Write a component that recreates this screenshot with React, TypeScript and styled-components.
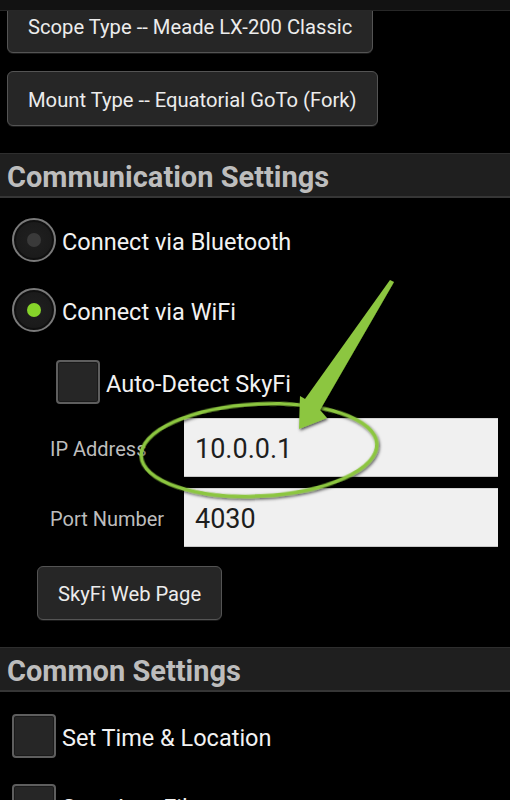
import React from "react";
import styled, { createGlobalStyle } from "styled-components";

const Global = createGlobalStyle`
  html, body { margin: 0; padding: 0; background: #000; }
  body { font-family: Roboto, "Noto Sans", sans-serif; overflow: hidden; }
  * { box-sizing: border-box; }
`;

const Page = styled.div`
  position: relative;
  width: 510px;
  height: 800px;
  overflow: hidden;
  background: #000;
`;

const TopBar = styled.div`
  position: absolute;
  top: 0;
  left: 0;
  right: 0;
  height: 11px;
  background: #121212;
  border-bottom: 1px solid #272727;
  overflow: hidden;
  display: flex;
  align-items: flex-end;
  z-index: 2;
`;

const TopTitle = styled.div`
  font-size: 29px;
  font-weight: 700;
  line-height: 32px;
  color: #bdbdbd;
  padding-left: 7px;
  margin-bottom: 11px;
  white-space: nowrap;
`;

const Content = styled.div`
  display: flex;
  flex-direction: column;
  margin-top: -2px;
`;

const Block = styled.div<{ $mt?: number; $pl?: number }>`
  margin-top: ${(p) => p.$mt ?? 0}px;
  padding-left: ${(p) => p.$pl ?? 0}px;
  display: flex;
  align-items: center;
`;

const ActionButton = styled.button<{ $h?: number }>`
  height: ${(p) => p.$h ?? 55}px;
  padding: 2px 20px 0;
  background: #262626;
  border: 1px solid #545454;
  border-radius: 6px;
  color: #ececec;
  font-family: Roboto, sans-serif;
  font-size: 20.2px;
  white-space: nowrap;
  box-shadow: 0 1px 0 #1a1a1a;
`;

const SectionHeader = styled.div<{ $mt: number }>`
  margin-top: ${(p) => p.$mt}px;
  height: 45px;
  background: #1f1f1f;
  border-top: 1px solid #2e2e2e;
  border-bottom: 2px solid #363636;
  display: flex;
  align-items: center;
  padding: 4px 0 0 7px;
  font-size: 29px;
  font-weight: 700;
  color: #bdbdbd;
  white-space: nowrap;
`;

const Option = styled.label`
  display: flex;
  align-items: center;
  gap: 6px;
  font-size: 23.5px;
  color: #f2f2f2;
  white-space: nowrap;
`;

const OptionText = styled.span`
  padding-top: 3px;
`;

const RadioCircle = styled.span<{ $on?: boolean }>`
  width: 44px;
  height: 44px;
  border-radius: 50%;
  border: 2px solid #7a7a7a;
  background: radial-gradient(circle, #202020 0%, #1a1a1a 70%, #141414 100%);
  box-shadow: inset 0 0 0 2px #101010;
  display: flex;
  align-items: center;
  justify-content: center;
  &::after {
    content: "";
    width: 14px;
    height: 14px;
    border-radius: 50%;
    background: ${(p) => (p.$on ? "#86d42a" : "#3a3a3a")};
  }
`;

const CheckBox = styled.span`
  width: 44px;
  height: 44px;
  border: 2px solid #5e5e5e;
  border-radius: 4px;
  background: #262626;
  box-shadow: inset 0 0 0 1px #1a1a1a;
`;

const FieldRow = styled.div<{ $mt: number }>`
  margin-top: ${(p) => p.$mt}px;
  display: grid;
  grid-template-columns: 134px 314px;
  align-items: center;
  padding-left: 50px;
`;

const FieldLabel = styled.span`
  font-size: 20px;
  color: #bdbdbd;
  white-space: nowrap;
  padding-top: 3px;
`;

const FieldInput = styled.div`
  height: 59px;
  background: #f0f0f0;
  border-top: 1px solid #d4d4d4;
  border-bottom: 1px solid #c8c8c8;
  display: flex;
  align-items: center;
  padding: 2px 0 0 11px;
  font-size: 27px;
  color: #1e1e1e;
`;

const Annotation = styled.svg`
  position: absolute;
  top: 0;
  left: 0;
  width: 510px;
  height: 800px;
  pointer-events: none;
  z-index: 3;
`;

export default function App() {
  return (
    <Page>
      <Global />
      <Content>
        <Block $pl={7}>
          <ActionButton>Scope Type -- Meade LX-200 Classic</ActionButton>
        </Block>
        <Block $pl={7} $mt={18}>
          <ActionButton>Mount Type -- Equatorial GoTo (Fork)</ActionButton>
        </Block>

        <SectionHeader $mt={27}>Communication Settings</SectionHeader>

        <Block $pl={12} $mt={20}>
          <Option>
            <RadioCircle />
            <OptionText>Connect via Bluetooth</OptionText>
          </Option>
        </Block>
        <Block $pl={12} $mt={26}>
          <Option>
            <RadioCircle $on />
            <OptionText>Connect via WiFi</OptionText>
          </Option>
        </Block>
        <Block $pl={56} $mt={28}>
          <Option>
            <CheckBox />
            <OptionText>Auto-Detect SkyFi</OptionText>
          </Option>
        </Block>

        <FieldRow $mt={14}>
          <FieldLabel>IP Address</FieldLabel>
          <FieldInput>10.0.0.1</FieldInput>
        </FieldRow>
        <FieldRow $mt={11}>
          <FieldLabel>Port Number</FieldLabel>
          <FieldInput>4030</FieldInput>
        </FieldRow>

        <Block $pl={37} $mt={19}>
          <ActionButton $h={54}>SkyFi Web Page</ActionButton>
        </Block>

        <SectionHeader $mt={27}>Common Settings</SectionHeader>

        <Block $pl={12} $mt={22}>
          <Option>
            <CheckBox />
            <OptionText>Set Time &amp; Location</OptionText>
          </Option>
        </Block>
        <Block $pl={12} $mt={26}>
          <Option>
            <CheckBox />
            <OptionText>Save Log Files</OptionText>
          </Option>
        </Block>
      </Content>

      <TopBar>
        <TopTitle>Telescope Type &amp; Mount Setup</TopTitle>
      </TopBar>

      <Annotation viewBox="0 0 510 800">
        <defs>
          <filter id="shadow" x="-20%" y="-20%" width="140%" height="140%">
            <feDropShadow dx="1" dy="1.5" stdDeviation="1.4" floodColor="#000" floodOpacity="0.7" />
          </filter>
        </defs>
        <ellipse
          cx="259"
          cy="450"
          rx="118"
          ry="46"
          transform="rotate(-3 259 450)"
          fill="none"
          stroke="#8cc63f"
          strokeWidth="3.5"
          filter="url(#shadow)"
        />
        <polygon
          points="390,280 394,282 320,410 327,418 299,429 300,396 305,399"
          fill="#8cc63f"
          filter="url(#shadow)"
        />
      </Annotation>
    </Page>
  );
}
